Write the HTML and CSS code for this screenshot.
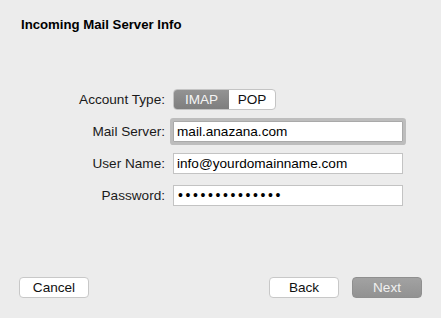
FILE: index.html
```html
<!DOCTYPE html>
<html lang="en">
<head>
    <meta charset="UTF-8">
    <meta name="viewport" content="width=device-width, initial-scale=1.0">
    <link rel="stylesheet" href="styles.css">
</head>
<body>
<div class="page">
    <h1 class="title">Incoming Mail Server Info</h1>

    <div class="form">
        <div class="label">Account Type:</div>
        <div class="segmented">
            <div class="segment active">IMAP</div>
            <div class="segment">POP</div>
        </div>

        <div class="label">Mail Server:</div>
        <div class="field focused">mail.anazana.com</div>

        <div class="label">User Name:</div>
        <div class="field">info@yourdomainname.com</div>

        <div class="label">Password:</div>
        <div class="field password">••••••••••••••</div>
    </div>

    <div class="footer">
        <div class="button">Cancel</div>
        <div class="spacer"></div>
        <div class="button">Back</div>
        <div class="button disabled">Next</div>
    </div>
</div>
</body>
</html>
```

FILE: styles.css
```css
 html, body {
     margin: 0;
     padding: 0;
 }
 body {
     background: #ececec;
     font-family: "Liberation Sans", Arial, sans-serif;
     font-size: 13.6px;
     color: #111;
 }
 .page {
     display: flex;
     flex-direction: column;
     width: 441px;
     height: 318px;
     box-sizing: border-box;
 }
 .title {
     margin: 0;
     padding: 17px 0 0 21px;
     font-size: 13.2px;
     line-height: 16px;
     font-weight: bold;
     color: #000;
 }
 .form {
     display: grid;
     grid-template-columns: 165px 230px;
     grid-auto-rows: 21px;
     column-gap: 8px;
     row-gap: 11px;
     margin-top: 56px;
 }
 .label {
     text-align: right;
     line-height: 21px;
     color: #1a1a1a;
 }
 .segmented {
     display: flex;
     width: 103px;
     height: 21px;
     box-sizing: border-box;
     border: 1px solid #c4c4c4;
     border-radius: 4px;
     background: #fff;
     overflow: hidden;
 }
 .segment {
     flex: 1;
     text-align: center;
     line-height: 19px;
     color: #111;
 }
 .segment.active {
     flex: 0 0 55px;
     background: linear-gradient(#939393, #7e7e7e);
     color: #f4f4f4;
 }
 .field {
     height: 21px;
     box-sizing: border-box;
     border: 1px solid #c3c3c3;
     background: #fff;
     padding-left: 3px;
     line-height: 19px;
     color: #000;
     white-space: nowrap;
 }
 .field.focused {
     border-color: #a9a9a9;
     box-shadow: 0 0 0 3px #bdbdbd;
     border-radius: 1px;
 }
 .field.password {
     letter-spacing: 2.6px;
     padding-left: 4px;
     font-size: 14px;
 }
 .footer {
     display: flex;
     gap: 13px;
     margin-top: auto;
     padding: 0 19px 20px 19px;
 }
 .spacer {
     flex: 1;
 }
 .button {
     width: 70px;
     height: 21px;
     box-sizing: border-box;
     border: 1px solid #c8c8c8;
     border-radius: 4px;
     background: #fff;
     text-align: center;
     line-height: 19px;
     color: #111;
 }
 .button.disabled {
     background: linear-gradient(#a2a2a2, #929292);
     border-color: #8f8f8f;
     color: #f0f0f0;
 }
```
